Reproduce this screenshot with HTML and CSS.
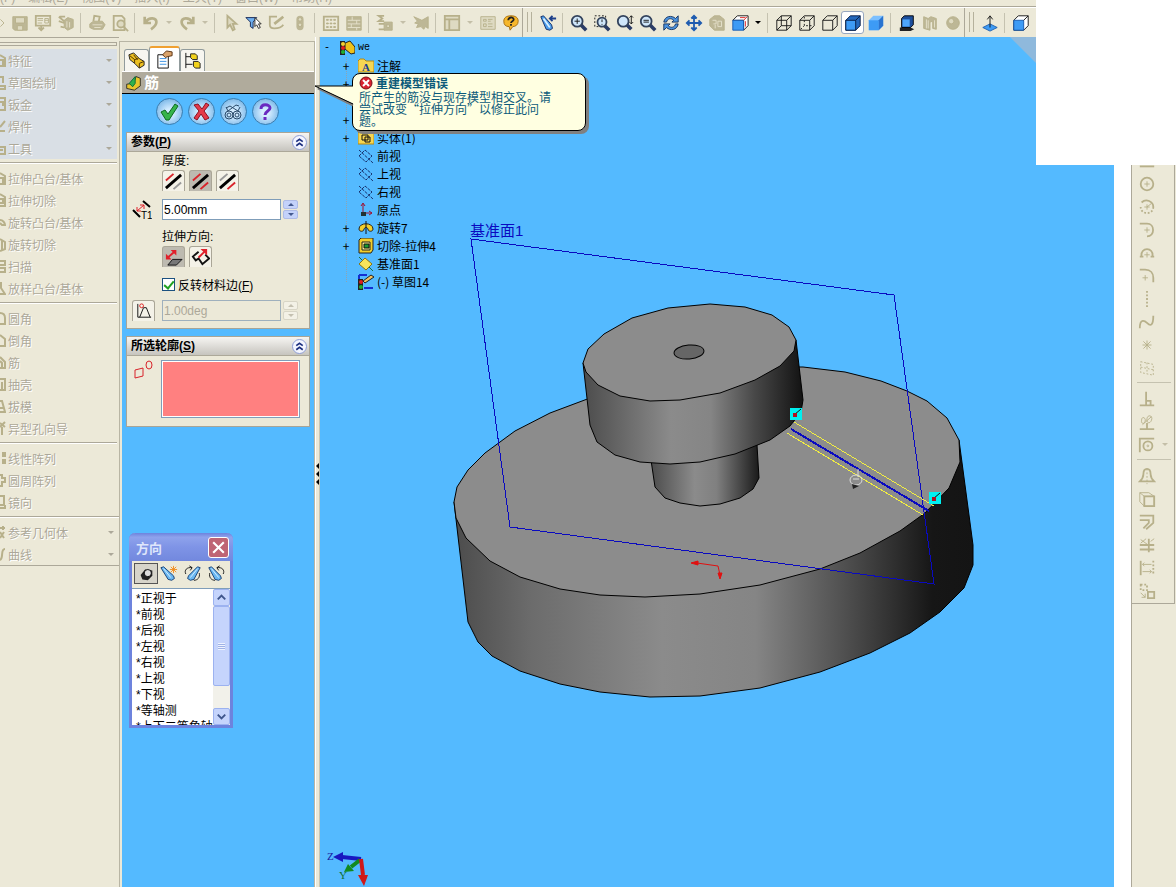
FILE: index.html
```html
<!DOCTYPE html>
<html lang="zh-CN">
<head>
    <meta charset="UTF-8">
    <title>we</title>
    <link rel="stylesheet" href="styles.css">
</head>
<body>
    <nav class="menubar">
        <a href="#">(F)</a><a href="#">编辑(E)</a><a href="#">视图(V)</a><a href="#">插入(I)</a><a href="#">工具(T)</a><a href="#">窗口(W)</a><a href="#">帮助(H)</a>
    </nav>

    <div class="toolbar">
        <button class="tool clipped" aria-label="打开" disabled><svg viewBox="0 0 8 20"><path d="M0 6l4 4-4 4"/></svg></button>
        <button class="tool" aria-label="保存" disabled><svg viewBox="0 0 20 20"><path class="solid" d="M2 3h16v15H4l-2-2z"/><path class="pale" d="M5 4h10v6H5zM7 13h6v5H7z"/></svg></button>
        <button class="tool" aria-label="工程图" disabled><svg viewBox="0 0 20 20"><path class="thick" d="M2 2h16v11H2z"/><path d="M4 5h6M4 7h6M4 10h5M12 5h4v5h-4zM12 7h4"/><path class="thick" d="M8 13v5M5 15l3 3 3-3"/></svg></button>
        <button class="tool" aria-label="装配体" disabled><svg viewBox="0 0 20 20"><path class="solid" d="M8 7l4-3 6 2v9l-6 3-4-3z"/><path class="light" d="M11 8v7M14 9v6"/><path class="thick" d="M2 3l6 5M2 8l6 2M4 14l4 1M3 3h6"/></svg></button>
        <span class="sep"></span>
        <button class="tool" aria-label="打印" disabled><svg viewBox="0 0 20 20"><path class="solid" d="M2 11l4-3h10l3 4-3 5H6l-4-2z"/><path class="thick" d="M6 8l1-6 6 1-1 5"/><path class="light" d="M5 12h11M7 15h7"/></svg></button>
        <button class="tool" aria-label="预览" disabled><svg viewBox="0 0 20 20"><path class="thick" d="M3 2h9l3 3v13H3z"/><circle class="pale thick" cx="11" cy="11" r="4"/><path class="thick" d="M14 14l5 5"/></svg></button>
        <span class="sep"></span>
        <button class="tool" aria-label="撤消" disabled><svg viewBox="0 0 20 20"><path class="heavy" d="M3 3v7h7M4 9c4-6 12-5 12 0 0 4-3 6-6 8"/></svg></button>
        <button class="drop" aria-label="撤消列表" disabled></button>
        <button class="tool" aria-label="重做" disabled><svg viewBox="0 0 20 20"><path class="heavy" d="M17 3v7h-7M16 9C12 3 4 4 4 9c0 4 3 6 6 8"/></svg></button>
        <button class="drop" aria-label="重做列表" disabled></button>
        <span class="sep"></span>
        <button class="tool" aria-label="选择" disabled><svg viewBox="0 0 20 20"><path class="pale thick" d="M6 2v13l3-3 3 6 2-1-2-6h4z"/></svg></button>
        <button class="tool" aria-label="过滤器"><svg viewBox="0 0 20 20"><path d="M1 4h12L9 9v7l-3-2V9z" fill="#6fb0ef" stroke="#102050"/><path d="M11 4v10l2-2 2 4 2-1-2-4h3z" fill="#fff" stroke="#222"/></svg></button>
        <button class="tool" aria-label="草图" disabled><svg viewBox="0 0 20 20"><path class="thick" d="M10 3H2v9c0 3 2 4 5 4 5 0 8-1 10-4"/><path class="heavy" d="M7 11L17 3"/></svg></button>
        <button class="tool" aria-label="重建模型" disabled><svg viewBox="0 0 20 20"><rect class="solid" x="6" y="2" width="8" height="16" rx="4"/><circle class="pale" cx="10" cy="6" r="2"/><circle class="pale" cx="10" cy="12" r="2"/></svg></button>
        <span class="sep"></span>
        <button class="tool" aria-label="网格" disabled><svg viewBox="0 0 20 20"><path class="thick" d="M2 3h16v15H2z"/><path class="solid" d="M5 6h2v1H5zM9 6h2v1H9zM13 6h2v1h-2zM5 10h2v1H5zM9 10h2v1H9zM13 10h2v1h-2zM5 14h2v1H5zM9 14h2v1H9zM13 14h2v1h-2z"/></svg></button>
        <button class="tool" aria-label="纹理" disabled><svg viewBox="0 0 20 20"><path class="solid" d="M2 3h16v15H2z"/><path class="light" d="M3 7h14M3 11h14M3 15h14M8 3v4M13 7v4M7 11v4M13 15v3"/></svg></button>
        <span class="sep"></span>
        <button class="tool" aria-label="计算" disabled><svg viewBox="0 0 20 20"><path class="thick" d="M9 2H3l4 3-4 3h6M3 11h6M3 17h7"/><path class="solid" d="M9 9h9v9H9z"/><path class="pale" d="M12 12h3v3h-3z"/></svg></button>
        <button class="drop" aria-label="计算列表" disabled></button>
        <button class="tool" aria-label="检查" disabled><svg viewBox="0 0 20 20"><path class="solid" d="M2 3l9 4 7-4v13l-3-2-2 3-3-3-5 1 2-4-4-1 3-2z"/></svg></button>
        <span class="sep"></span>
        <button class="tool" aria-label="视窗" disabled><svg viewBox="0 0 20 20"><path class="pale thick" d="M2 2h16v16H2z"/><path class="thick" d="M2 6h16M7 6v12"/></svg></button>
        <button class="drop" aria-label="视窗列表" disabled></button>
        <button class="tool" aria-label="属性" disabled><svg viewBox="0 0 20 20"><path class="pale" d="M2 3h16v14H2z"/><path d="M5 6h3v2H5zM10 6h5M10 8h3M5 11h3v3H5zM10 11h5M10 14h5"/></svg></button>
        <button class="tool" aria-label="帮助"><svg viewBox="0 0 20 20"><path d="M10 2c5 0 8 2 8 6s-3 6-6 6l-3 4-1-4c-4 0-6-2-6-6s3-6 8-6z" fill="#f6b72b" stroke="#a06a10"/><path d="M7 7c0-4 6-4 6-1 0 2-3 2-3 4M10 11v2" fill="none" stroke="#222" stroke-width="2"/></svg></button>
        <span class="grip"></span>
        <button class="tool" aria-label="视图定向"><svg viewBox="0 0 20 20"><path d="M2 3l3-1 9 10 1 4-3 2-4-1z" fill="#4c9cea" stroke="#102860"/><path d="M5 5l7 10" stroke="#d8f0ff" stroke-width="2"/><path d="M19 5h-7M15 2l-3 3 3 3" stroke="#1d3f8a" stroke-width="2" fill="none"/></svg></button>
        <span class="sep"></span>
        <button class="tool" aria-label="整屏显示全图"><svg viewBox="0 0 20 20"><path class="handle" d="M12 12l6 6"/><circle class="lens" cx="8" cy="8" r="6"/><path class="ink" d="M5 8h6M8 5v6"/></svg></button>
        <button class="tool" aria-label="局部放大"><svg viewBox="0 0 20 20"><path class="ink dashed" d="M2 2h12v12H2z"/><path class="handle" d="M13 13l5 5"/><circle class="lens" cx="10" cy="9" r="5"/><path class="ink" d="M10 6v3M10 11v1"/></svg></button>
        <button class="tool" aria-label="放大缩小"><svg viewBox="0 0 20 20"><path class="handle" d="M12 12l5 5"/><circle class="lens" cx="8" cy="8" r="6"/><path class="ink" d="M17 2v9M15 4l2-2 2 2M15 9l2 2 2-2"/></svg></button>
        <button class="tool" aria-label="放大选取范围"><svg viewBox="0 0 20 20"><path class="handle" d="M12 12l6 6"/><circle class="lens" cx="8" cy="8" r="6"/><path class="ink" d="M5 7h6M5 9h6"/></svg></button>
        <button class="tool" aria-label="旋转视图"><svg viewBox="0 0 20 20"><path d="M2 9c1-7 9-8 13-4l3-3v7h-7l2-2c-3-3-7-2-8 2zM18 11c-1 7-9 8-13 4l-3 3v-7h7l-2 2c3 3 7 2 8-2z" fill="#4c94e0" stroke="#12305c"/></svg></button>
        <button class="tool" aria-label="平移"><svg viewBox="0 0 20 20"><path d="M10 2v16M2 10h16M7 5l3-3 3 3M7 15l3 3 3-3M5 7l-3 3 3 3M15 7l3 3-3 3" fill="none" stroke="#1f5cb0" stroke-width="2"/></svg></button>
        <button class="tool" aria-label="3D" disabled><svg viewBox="0 0 20 20"><path class="solid" d="M2 6l5-4h6l5 4v12H7l-5-5z"/><path class="light" d="M5 7h4v4H6M11 8h4v6h-4zM8 12v4"/></svg></button>
        <button class="tool" aria-label="标准视图"><svg viewBox="0 0 20 20"><path d="M7 2h12v11l-5 5V7H2z" fill="#fff" stroke="#111"/><path d="M2 7h12v11H2z" fill="#3d9bf5" stroke="#1458b0"/><path d="M14 7l4-4M10 4h6M16 8v6" stroke="#d22"/></svg></button>
        <button class="drop on" aria-label="标准视图列表"></button>
        <span class="sep"></span>
        <button class="tool" aria-label="线架图"><svg viewBox="0 0 20 20"><path class="ink" d="M2 7h11v11H2zM7 2h11v11H7zM2 7l5-5M13 7l5-5M13 18l5-5M2 18l5-5"/></svg></button>
        <button class="tool" aria-label="隐藏线可见"><svg viewBox="0 0 20 20"><path class="ink" d="M2 7h11v11H2zM2 7l5-5h11v11l-5 5M13 7l5-5"/><path class="ink dashed" d="M7 3v10h10M3 17l4-4"/></svg></button>
        <button class="tool" aria-label="消除隐藏线"><svg viewBox="0 0 20 20"><path class="ink" d="M2 7h11v11H2zM2 7l5-5h11v11l-5 5M13 7l5-5"/></svg></button>
        <button class="tool active" aria-label="带边线上色"><svg viewBox="0 0 20 20"><path d="M2 7l5-5h11v11l-5 5H2z" fill="#2468bc" stroke="#061a40"/><path d="M2 7h11v11H2z" fill="#3d9bf5" stroke="#061a40"/><path d="M13 7l5-5" stroke="#061a40"/></svg></button>
        <button class="tool" aria-label="上色"><svg viewBox="0 0 20 20"><path d="M2 7l5-5h11v11l-5 5H2z" fill="#7cc0ff"/><path d="M2 7h11v11H2z" fill="#3d9bf5"/><path d="M13 7l5-5v11l-5 5z" fill="#2a74d0"/></svg></button>
        <span class="sep"></span>
        <button class="tool" aria-label="阴影"><svg viewBox="0 0 20 20"><path d="M2 15h12l4 2-4 2H2z" fill="#222"/><path d="M4 5l3-3h10v10l-3 3H4z" fill="#1d4f9c" stroke="#000"/><path d="M5 6h8v8H5z" fill="#4ea6fa"/></svg></button>
        <button class="tool" aria-label="剖面视图" disabled><svg viewBox="0 0 20 20"><path class="solid" d="M3 3l5 2 3-2 6 2v12l-4-1V8l-3 1v9l-7-2z"/><path class="light" d="M6 6v10M8 7v9M15 7v8"/></svg></button>
        <button class="tool" aria-label="RealView" disabled><svg viewBox="0 0 20 20"><circle class="solid" cx="10" cy="10" r="7"/><circle class="pale" cx="8" cy="8" r="3"/></svg></button>
        <span class="grip"></span>
        <button class="tool" aria-label="正视于"><svg viewBox="0 0 20 20"><path d="M10 11l8 4-8 4-8-4z" fill="#3d9bf5" stroke="#1e5fae"/><path class="ink" d="M10 15V3M7 6l3-4 3 4"/></svg></button>
        <span class="sep"></span>
        <button class="tool" aria-label="前视"><svg viewBox="0 0 20 20"><path d="M2 7l5-5h11v11l-5 5H2z" fill="#fff" stroke="#111"/><path d="M2 7h11v11H2z" fill="#3d9bf5" stroke="#1458b0"/><path class="ink" d="M13 7l5-5"/></svg></button>
        <button class="tool" aria-label="后视"><svg viewBox="0 0 20 20"><path class="ink" d="M2 7h11v11H2z"/></svg></button>
    </div>

    <main class="workspace">
        <aside class="commands">
            <div class="commands-grip"></div>
            <ul class="commands-tabs">
                <li><button class="arrow" disabled><svg viewBox="0 0 6 16"><path d="M0 3l5 3v8H0M0 8h3v6"/></svg>特征</button></li>
                <li><button class="arrow" disabled><svg viewBox="0 0 6 16"><path d="M0 3h3v6M0 12h5v3H0"/></svg>草图绘制</button></li>
                <li><button class="arrow" disabled><svg viewBox="0 0 6 16"><path d="M0 2h5v12H0M0 6h3v4"/></svg>钣金</button></li>
                <li><button class="arrow" disabled><svg viewBox="0 0 6 16"><path d="M5 3L0 9M0 13h5"/></svg>焊件</button></li>
                <li><button class="arrow" disabled><svg viewBox="0 0 6 16"><path d="M0 7h5v7H0M0 10h3"/></svg>工具</button></li>
            </ul>
            <ul>
                <li><button disabled><svg viewBox="0 0 6 16"><path d="M0 3l5 3v8H0M0 8h3v6"/></svg>拉伸凸台/基体</button></li>
                <li><button disabled><svg viewBox="0 0 6 16"><path d="M0 2l5 3v9H0M0 7h3v4H0"/></svg>拉伸切除</button></li>
                <li><button disabled><svg viewBox="0 0 6 16"><path d="M0 6c3 0 5 3 5 5H2L0 9"/></svg>旋转凸台/基体</button></li>
                <li><button disabled><svg viewBox="0 0 6 16"><path d="M0 3l5 3v7l-5 2M2 5v9"/></svg>旋转切除</button></li>
                <li><button disabled><svg viewBox="0 0 6 16"><path d="M0 3h5v4H0M0 10h5v4H0"/></svg>扫描</button></li>
                <li><button disabled><svg viewBox="0 0 6 16"><path d="M1 2v6l4 6H0"/></svg>放样凸台/基体</button></li>
            </ul>
            <ul>
                <li><button disabled><svg viewBox="0 0 6 16"><path d="M0 3c3 0 5 2 5 5v6H0"/></svg>圆角</button></li>
                <li><button disabled><svg viewBox="0 0 6 16"><path d="M0 3l5 4v7H0"/></svg>倒角</button></li>
                <li><button disabled><svg viewBox="0 0 6 16"><path d="M0 3l5 5v6H0M0 7l2 2v5"/></svg>筋</button></li>
                <li><button disabled><svg viewBox="0 0 6 16"><path d="M0 3h5v11H0M2 6v8"/></svg>抽壳</button></li>
                <li><button disabled><svg viewBox="0 0 6 16"><path d="M0 3h2l3 11H0M0 10h4"/></svg>拔模</button></li>
                <li><button disabled><svg viewBox="0 0 6 16"><path d="M0 3l5 4M5 2L0 7M2 7v8"/></svg>异型孔向导</button></li>
            </ul>
            <ul>
                <li><button disabled><svg viewBox="0 0 6 16"><path d="M3 3h2v3H3zM3 10h2v3H3z"/></svg>线性阵列</button></li>
                <li><button disabled><svg viewBox="0 0 6 16"><path d="M0 3h2v3h3v4H2v4H0"/></svg>圆周阵列</button></li>
                <li><button disabled><svg viewBox="0 0 6 16"><path d="M0 2h4v9H0M0 14h5v-3"/></svg>镜向</button></li>
            </ul>
            <ul>
                <li><button class="arrow" disabled><svg viewBox="0 0 6 16"><path d="M0 4h5M3 2v4M0 8l4 6M4 8l-4 6"/></svg>参考几何体</button></li>
                <li><button class="arrow" disabled><svg viewBox="0 0 6 16"><path d="M5 3c-5 0-1 9-5 11"/></svg>曲线</button></li>
            </ul>
        </aside>

        <section class="manager">
            <div class="tabs">
                <button class="tab" aria-label="特征管理器"><svg viewBox="0 0 20 20"><path d="M2 4l5-2 6 6 5 3v4l-5 3-5-5-5-4z" fill="#edc020" stroke="#222"/><path d="M3 5l5 4 4-1M8 9v4M13 13l5-2M13 13v5M7 4l4 5" fill="none" stroke="#4a3000"/></svg></button>
                <button class="tab current" aria-label="属性管理器"><svg viewBox="0 0 20 20"><path d="M3 5h11v14H3z" fill="#fff" stroke="#111"/><path d="M5 9h7M5 12h7M5 15h7" stroke="#3a90e0"/><path d="M8 5l4-4 6 1v4l-5 1-2 1z" fill="#d9a26a" stroke="#5a3010"/></svg></button>
                <button class="tab" aria-label="配置管理器"><svg viewBox="0 0 20 20"><path class="ink" d="M3 2v16M3 6h5M3 14h7"/><path d="M8 3h5l2 2v4h-5l-2-2zM11 11h5l2 2v5h-5l-2-2z" fill="#f2d21c" stroke="#222"/></svg></button>
            </div>
            <h1 class="manager-title"><svg viewBox="0 0 20 20"><path d="M2 12l8-1 3-8 5 2v9l-7 5-9-2z" fill="#e9c62a" stroke="#222"/><path d="M5 11l7-8v8l-3 4z" fill="#31b24c" stroke="#063"/></svg>筋</h1>
            <div class="confirm">
                <button aria-label="确定"><svg viewBox="0 0 20 20"><path d="M2 10l4-2 3 4 7-10 3 2-9 14H7z" fill="#35b44a" stroke="#0d6a20"/></svg></button>
                <button aria-label="取消"><svg viewBox="0 0 20 20"><path d="M3 3l4-1 4 5 4-6 3 2-5 6 5 7-4 2-4-6-4 6-3-2 5-7z" fill="#e43a4a" stroke="#8a1020"/></svg></button>
                <button aria-label="细节预览"><svg viewBox="0 0 20 20"><g fill="none" stroke="#2a4a6a"><circle cx="6" cy="13" r="4"/><circle cx="14" cy="13" r="4"/><circle cx="6" cy="13" r="2"/><circle cx="14" cy="13" r="2"/><path d="M5 9l8-6 3 1M15 9L7 4 3 6M5 9L3 5M15 9l2-4"/></g></svg></button>
                <button aria-label="帮助"><svg viewBox="0 0 20 20"><path d="M6 7c0-6 9-5 9-1 0 3-5 3-5 7M10 15v3" fill="none" stroke="#6a2ac0" stroke-width="3"/></svg></button>
            </div>

            <form class="groups">
                <fieldset class="group">
                    <div class="group-head"><h2>参数(<u>P</u>)</h2><button type="button" class="fold" aria-label="折叠参数"><svg viewBox="0 0 16 16"><path d="M4 7l4-3 4 3M4 12l4-3 4 3"/></svg></button></div>
                    <div class="group-body">
                        <span class="caption">厚度:</span>
                        <div class="choices">
                            <button type="button" aria-label="第一边"><svg viewBox="0 0 20 20"><path d="M2 9l8-7" stroke="#d8232a" stroke-width="2"/><path d="M2 17L18 3" stroke="#000" stroke-width="3"/><path d="M10 18l8-7" stroke="#999" stroke-width="2"/></svg></button>
                            <button type="button" class="pressed" aria-label="两边"><svg viewBox="0 0 20 20"><path d="M2 9l8-7M10 18l8-7" stroke="#d8232a" stroke-width="2"/><path d="M2 17L18 3" stroke="#000" stroke-width="3"/></svg></button>
                            <button type="button" aria-label="第二边"><svg viewBox="0 0 20 20"><path d="M2 9l8-7" stroke="#999" stroke-width="2"/><path d="M2 17L18 3" stroke="#000" stroke-width="3"/><path d="M10 18l8-7" stroke="#d8232a" stroke-width="2"/></svg></button>
                        </div>
                        <div class="field">
                            <label for="thickness" aria-label="筋厚度"><svg viewBox="0 0 20 20"><path d="M11 1l7 6M1 10l7 7" stroke="#000" stroke-width="2"/><path d="M5 11l7-6M5 7v4h4M8 5h4v4" fill="none" stroke="#e0202a"/><text x="9" y="19" font-size="10">T1</text></svg></label>
                            <input type="text" id="thickness" value="5.00mm">
                            <span class="spin"><button type="button" aria-label="增加"></button><button type="button" class="down" aria-label="减少"></button></span>
                        </div>
                        <span class="caption">拉伸方向:</span>
                        <div class="choices">
                            <button type="button" class="pressed" aria-label="平行于草图"><svg viewBox="0 0 20 20"><path d="M9 12h10l-6 6H4z" fill="#777" stroke="#111"/><path d="M4 10l7-6" stroke="#e0202a" stroke-width="2"/><path d="M2 12V6l6 6zM13 2v6L7 2z" fill="#e0202a"/></svg></button>
                            <button type="button" aria-label="垂直于草图"><svg viewBox="0 0 20 20"><path d="M8 4L2 9l3 4 3-2 4 6 7-6-4-4" fill="none" stroke="#111" stroke-width="2"/><path d="M8 10l6-6" stroke="#e0202a" stroke-width="2"/><path d="M17 1v7l-7-7z" fill="#e0202a"/></svg></button>
                        </div>
                        <label class="check"><input type="checkbox" checked><span>反转材料边(<u>F</u>)</span></label>
                        <div class="field">
                            <button type="button" class="draft" aria-label="拔模开关"><svg viewBox="0 0 20 20"><path class="ink" d="M4 2v14h14M6 16l4-10h3l4 10"/><circle cx="8" cy="4" r="2" fill="none" stroke="#d22"/></svg></button>
                            <input type="text" aria-label="拔模角度" value="1.00deg" disabled>
                            <span class="spin off"><button type="button" aria-label="增加角度" disabled></button><button type="button" class="down" aria-label="减少角度" disabled></button></span>
                        </div>
                    </div>
                </fieldset>
                <fieldset class="group">
                    <div class="group-head"><h2>所选轮廓(<u>S</u>)</h2><button type="button" class="fold" aria-label="折叠所选轮廓"><svg viewBox="0 0 16 16"><path d="M4 7l4-3 4 3M4 12l4-3 4 3"/></svg></button></div>
                    <div class="group-body contour">
                        <label for="contours" aria-label="所选轮廓"><svg viewBox="0 0 20 20"><g fill="none" stroke="#d8232a"><path d="M2 10l8-2v8l-8 2z"/><ellipse cx="16" cy="5" rx="3" ry="4"/></g></svg></label>
                        <select id="contours" size="3"></select>
                    </div>
                </fieldset>
            </form>

            <div class="orientation">
                <header><h2>方向</h2><button class="close" aria-label="关闭"><svg viewBox="0 0 16 16"><path d="M3 3l10 10M13 3L3 13"/></svg></button></header>
                <div class="orientation-tools">
                    <button class="pressed" aria-label="固定"><svg viewBox="0 0 20 20"><path d="M4 11l5-6 8 1v6l-5 5-6-1z" fill="#222"/><circle cx="12" cy="9" r="4" fill="#ddd" stroke="#000"/></svg></button>
                    <button aria-label="新视图"><svg viewBox="0 0 20 20"><path d="M1 3l3-1 11 10 1 3-3 2-4-1z" fill="#6ab8f2" stroke="#123a70"/><path d="M4 4l8 10" stroke="#e0f2ff"/><path d="M15 1v8M11 5h8M12 2l6 6M18 2l-6 6" stroke="#f08a1a"/></svg></button>
                    <button aria-label="更新视图"><svg viewBox="0 0 20 20"><path d="M18 3l-3-1L5 12l-1 3 3 2 4-1z" fill="#6ab8f2" stroke="#123a70"/><path d="M15 4L7 14" stroke="#e0f2ff"/><path d="M9 3C3 2 0 6 2 10M17 9c1 5-2 8-6 8M6 1l3 2-2 3" fill="none" stroke="#111"/></svg></button>
                    <button aria-label="重设视图"><svg viewBox="0 0 20 20"><path d="M2 3l3-1 10 10 1 3-3 2-4-1z" fill="#6ab8f2" stroke="#123a70"/><path d="M5 4l8 10" stroke="#e0f2ff"/><path d="M11 3c6-1 9 3 7 7M3 9c-1 5 2 8 6 8M14 1l-3 2 2 3" fill="none" stroke="#111"/></svg></button>
                </div>
                <div class="orientation-list">
                    <select size="9" aria-label="方向">
                        <option>*正视于</option>
                        <option>*前视</option>
                        <option>*后视</option>
                        <option>*左视</option>
                        <option>*右视</option>
                        <option>*上视</option>
                        <option>*下视</option>
                        <option>*等轴测</option>
                        <option>*上下二等角轴测</option>
                    </select>
                    <div class="scroll">
                        <button aria-label="向上滚动"><svg viewBox="0 0 16 16"><path d="M4 10l4-4 4 4"/></svg></button>
                        <span class="thumb"></span>
                        <button aria-label="向下滚动"><svg viewBox="0 0 16 16"><path d="M4 6l4 4 4-4"/></svg></button>
                    </div>
                </div>
            </div>
        </section>

        <div class="splitter"><i></i><i></i><i></i></div>

        <section class="viewport">
            <svg class="scene" viewBox="320 37 794 850" preserveAspectRatio="xMinYMin slice">
                <defs>
                    <linearGradient id="disc" gradientUnits="userSpaceOnUse" x1="454" y1="0" x2="974" y2="0">
                        <stop offset="0" stop-color="#4c4c4c"/><stop offset=".15" stop-color="#6c6c6c"/><stop offset=".4" stop-color="#8b8b8b"/><stop offset=".58" stop-color="#858585"/><stop offset=".75" stop-color="#505050"/><stop offset=".92" stop-color="#161616"/><stop offset="1" stop-color="#141414"/>
                    </linearGradient>
                    <linearGradient id="boss" gradientUnits="userSpaceOnUse" x1="583" y1="0" x2="803" y2="0">
                        <stop offset="0" stop-color="#4c4c4c"/><stop offset=".4" stop-color="#8b8b8b"/><stop offset=".58" stop-color="#858585"/><stop offset=".78" stop-color="#484848"/><stop offset="1" stop-color="#121212"/>
                    </linearGradient>
                    <linearGradient id="neck" gradientUnits="userSpaceOnUse" x1="651" y1="0" x2="760" y2="0">
                        <stop offset="0" stop-color="#4c4c4c"/><stop offset=".4" stop-color="#8b8b8b"/><stop offset=".6" stop-color="#808080"/><stop offset="1" stop-color="#181818"/>
                    </linearGradient>
                </defs>
                <path d="M1010 37h104v104z" fill="#8fb9dc"/>
                <g stroke="#000" stroke-linejoin="round">
                    <path fill="url(#disc)" d="M454 502L468 622 478 642 492 656 520 671 560 684 600 692 650 697 700 696 760 688 820 672 870 653 910 633 940 612 964 588 973 565 973 545 959 440z"/>
                    <path fill="#8c8c8c" d="M454 502L457 487 468 470 485 453 515 431 550 413 590 398 640 384 700 373 755 367 803 367 845 372 881 381 907 391 927 401 947 418 959 440 960 462 949 488 925 513 900 531 860 553 820 569 760 585 700 594 645 597 600 595 560 589 520 577 490 561 466 538 456 518z"/>
                    <path fill="url(#neck)" d="M651 460L655 487 665 498 680 503 700 506 720 504 740 498 753 489 759 478 757 445z"/>
                    <path fill="url(#boss)" d="M583 363L590 425 597 442 615 455 640 462 670 464 700 462 735 454 770 440 790 426 801 412 803 400 796 340z"/>
                    <path fill="#8c8c8c" d="M583 363L588 349 604 334 632 318 668 308 710 304 745 307 772 315 789 327 796 340 794 351 780 366 755 380 720 393 680 400 650 401 620 396 598 385 586 372z"/>
                    <ellipse fill="#666" cx="689" cy="352" rx="15" ry="7" transform="rotate(-5 689 352)"/>
                </g>
                <path class="line plane" d="M471 239L894 295 934 584 510 527z"/>
                <text class="plane-name" x="470" y="236">基准面1</text>
                <path class="line rib" d="M794 422L934 506M787 433L923 515"/>
                <path class="line axis" d="M791 429L929 511"/>
                <g>
                    <path d="M790 408h12v12h-12zM929 492h12v12h-12z" fill="#00f0f0"/>
                    <path d="M794 415l7-6M933 499l7-6" stroke="#111"/>
                    <path d="M793 413h4v4h-4zM932 497h4v4h-4z" fill="#b01020"/>
                </g>
                <g fill="none" stroke="#ddd"><ellipse cx="856" cy="480" rx="6" ry="5"/><path d="M858 469v8M853 479h6"/></g>
                <path d="M852 484l7 2-6 3z" fill="#222"/>
                <g stroke="#e01010" fill="#e01010"><path d="M697 563l21 3 2 9" fill="none"/><path d="M691 563l7-2v4zM718 573h4l-2 6z"/></g>
                <g class="triad">
                    <path d="M361 859L342 857" stroke="#1818c0" stroke-width="4"/><path d="M333 857l10-5v10z" fill="#1818c0"/>
                    <path d="M360 860l-9 7" stroke="#128a20" stroke-width="4"/><path d="M344 872l4-8 6 7z" fill="#128a20"/>
                    <path d="M361 859l2 16" stroke="#d01818" stroke-width="4"/><path d="M358 875h10l-4 11z" fill="#d01818"/>
                    <text x="327" y="860" fill="#1818a0">Z</text><text x="339" y="879" fill="#107030">Y</text>
                </g>
            </svg>

            <ul class="tree">
                <li class="root"><b>-</b><svg viewBox="0 0 16 16"><path d="M6 3l5-2 5 6v6l-4 1-6-5z" fill="#eec11a" stroke="#222"/><rect x="1" y="1" width="5" height="14" fill="#222"/><circle cx="4" cy="4" r="2" fill="#f5d030"/><circle cx="4" cy="8" r="2" fill="#e02020"/><circle cx="4" cy="12" r="2" fill="#20b030"/></svg>we</li>
                <li><b>+</b><svg viewBox="0 0 16 16"><path d="M0 3l2-2h4l2 2h8v11H0z" fill="#f6d652" stroke="#b58a10"/><text x="4" y="13" font-size="11" class="note">A</text></svg>注解</li>
                <li><b>+</b></li>
                <li></li>
                <li><b>+</b></li>
                <li><b>+</b><svg viewBox="0 0 16 16"><path d="M0 3l2-2h4l2 2h8v11H0z" fill="#f6d652" stroke="#b58a10"/><path class="ink" d="M4 5h6v5H4zM7 7h5v5H7z"/></svg>实体(1)</li>
                <li><b></b><svg viewBox="0 0 16 16"><path class="datum" d="M1 8l6-6 7 6-6 6zM1 2l14 13"/></svg>前视</li>
                <li><b></b><svg viewBox="0 0 16 16"><path class="datum" d="M1 8l6-6 7 6-6 6zM1 2l14 13"/></svg>上视</li>
                <li><b></b><svg viewBox="0 0 16 16"><path class="datum" d="M1 8l6-6 7 6-6 6zM1 2l14 13"/></svg>右视</li>
                <li><b></b><svg viewBox="0 0 16 16"><path d="M5 13V2M5 11h9M3 4l2-3 2 3M11 9l3 2-3 2" fill="none" stroke="#a01030"/><path d="M3 10h5v4H3z" fill="#233"/></svg>原点</li>
                <li><b>+</b><svg viewBox="0 0 16 16"><path d="M1 9c0-7 14-7 14 0 0 3-5 3-5 0-1-2-3-2-4 0 0 3-5 3-5 0z" fill="#f2cf2a" stroke="#222"/><path class="ink" d="M8 1v13"/></svg>旋转7</li>
                <li><b>+</b><svg viewBox="0 0 16 16"><path d="M1 2l2-2h12v12l-2 3H1z" fill="#f2cf2a" stroke="#222"/><path d="M4 4h8v8H4z" fill="#fff48a" stroke="#222"/><path d="M6 6h5v4H6z" fill="#1a9a30" stroke="#111"/></svg>切除-拉伸4</li>
                <li><b></b><svg viewBox="0 0 16 16"><path d="M1 1l4 4M11 11l4 4" stroke="#127040"/><path d="M1 8l6-6 7 6-6 6z" fill="#f7e45a" stroke="#8a7410"/></svg>基准面1</li>
                <li><b></b><svg viewBox="0 0 16 16"><path d="M1 1h8M1 1v5M6 14h9" stroke="#1430d0" stroke-width="2"/><path d="M5 7l8-6 3 2-9 6z" fill="#f0c060" stroke="#222"/><rect x="0" y="5" width="5" height="11" fill="#222"/><circle cx="3" cy="8" r="2" fill="#e02020"/><circle cx="3" cy="13" r="2" fill="#20b030"/></svg>(-) 草图14</li>
            </ul>

            <div class="callout" role="alert">
                <svg class="tail" viewBox="0 0 40 24"><path d="M39 20L4 3" stroke="#808080" stroke-width="3"/><path d="M40 1H1l39 18z" fill="#ffffe1"/><path d="M39 1H1l38 18" fill="none" stroke="#000"/></svg>
                <h3><svg viewBox="0 0 14 14"><circle cx="7" cy="7" r="6" fill="#d8232f" stroke="#7a1018"/><path d="M4 4l6 6M10 4l-6 6" stroke="#fff" stroke-width="2"/></svg>重建模型错误</h3>
                <p>所产生的筋没与现存模型相交叉。请<br>尝试改变“拉伸方向”以修正此问<br>题。</p>
            </div>
        </section>

        <aside class="rail">
            <button class="tool" aria-label="直线" disabled><svg viewBox="0 0 20 20"><path class="thick" d="M2 16h16"/></svg></button>
            <button class="tool" aria-label="圆" disabled><svg viewBox="0 0 20 20"><circle class="thick" cx="10" cy="10" r="7"/><path d="M7 10h6M10 7v6"/></svg></button>
            <button class="tool" aria-label="圆心圆弧" disabled><svg viewBox="0 0 20 20"><path class="thick" d="M4 5c5-5 13-1 13 5"/><path class="thick dashed" d="M17 10c0 9-14 9-14 0"/><path d="M7 10h6M10 7v6M10 10l5-4"/></svg></button>
            <button class="tool" aria-label="切线弧" disabled><svg viewBox="0 0 20 20"><path class="thick" d="M2 3h8c9 0 9 14 0 14"/><path d="M7 10h6M10 7v6"/></svg></button>
            <button class="tool" aria-label="三点圆弧" disabled><svg viewBox="0 0 20 20"><path class="thick" d="M4 14c-2-11 14-11 12 0M2 14h4M14 14h4"/><path d="M7 12h6M10 9v6"/></svg></button>
            <button class="tool" aria-label="圆角" disabled><svg viewBox="0 0 20 20"><path class="thick" d="M2 3h6c6 0 9 4 9 9v5"/><path d="M5 12h6M8 9v6"/></svg></button>
            <button class="tool" aria-label="中心线" disabled><svg viewBox="0 0 20 20"><path class="thick dashed" d="M10 1v18"/></svg></button>
            <button class="tool" aria-label="样条曲线" disabled><svg viewBox="0 0 20 20"><path class="thick" d="M2 17c0-12 6-8 8-6 4 4 7 3 7-8"/></svg></button>
            <button class="tool" aria-label="点" disabled><svg viewBox="0 0 20 20"><path d="M10 5v10M5 10h10M6 6l8 8M14 6l-8 8"/></svg></button>
            <button class="tool" aria-label="基准面" disabled><svg viewBox="0 0 20 20"><path class="dashed" d="M3 3l14 3v12L3 15zM3 9l14 3M10 4v12"/></svg></button>
            <span class="sep"></span>
            <button class="tool" aria-label="添加几何关系" disabled><svg viewBox="0 0 20 20"><path class="thick" d="M2 17h16M9 2v15M9 12h5v5"/></svg></button>
            <button class="tool" aria-label="显示几何关系" disabled><svg viewBox="0 0 20 20"><path class="thick" d="M2 18h16M10 11v7"/><path d="M4 8c0-5 5-3 4 1s-5 3-4-1zM10 6c1-5 7-3 5 2s-6 3-5-2zM5 13l10-9"/></svg></button>
            <div class="pair">
                <button class="tool" aria-label="快速捕捉" disabled><svg viewBox="0 0 20 20"><path class="thick" d="M2 18V3h16"/><circle class="thick" cx="11" cy="11" r="5"/><circle cx="11" cy="11" r="1"/></svg></button>
                <button class="drop" aria-label="快速捕捉列表" disabled></button>
            </div>
            <span class="sep"></span>
            <button class="tool" aria-label="镜向实体" disabled><svg viewBox="0 0 20 20"><path class="thick" d="M10 2c-3 0-4 3-4 6 0 4-2 6-4 8h16c-2-2-4-4-4-8 0-3-1-6-4-6z"/><path class="dashed" d="M10 2v17"/></svg></button>
            <button class="tool" aria-label="转换实体引用" disabled><svg viewBox="0 0 20 20"><path d="M2 3h10l6 4v11H7l-5-5zM2 3l5 4h11"/><path class="thick" d="M7 7h11v11H7z"/></svg></button>
            <button class="tool" aria-label="等距实体" disabled><svg viewBox="0 0 20 20"><path class="thick" d="M2 3h15v8l-8 7M2 8h10v3l-6 6"/></svg></button>
            <button class="tool" aria-label="剪裁实体" disabled><svg viewBox="0 0 20 20"><path class="thick" d="M2 10h16M12 3v15M2 15h16"/><path d="M3 4l7 5M3 8l6-5M14 6l4-3"/></svg></button>
            <button class="tool" aria-label="构造几何线" disabled><svg viewBox="0 0 20 20"><path class="thick" d="M3 2v16"/><path class="thick dashed" d="M17 2v16"/><path d="M5 6h10M5 14h10M7 4L5 6l2 2M13 12l2 2-2 2"/></svg></button>
            <button class="tool" aria-label="移动实体" disabled><svg viewBox="0 0 20 20"><path class="thick" d="M11 11h7v7h-7z"/><path class="thick dashed" d="M3 3h7v6H3z"/><path d="M3 12l5 5M8 13v4H4"/></svg></button>
        </aside>
    </main>
    <div class="blank"></div>
</body>
</html>
```
FILE: styles.css
```css
* {
    box-sizing: border-box;
}
body {
    margin: 0;
    height: 100vh;
    display: flex;
    flex-direction: column;
    overflow: hidden;
    position: relative;
    background-color: #ece9d8;
    font-family: "Liberation Sans", "Noto Sans CJK SC", sans-serif;
    font-size: 12px;
    color: #000;
}
h1, h2, h3, p, ul {
    margin: 0;
    padding: 0;
    font-size: 12px;
}
ul {
    list-style: none;
}
button {
    margin: 0;
    padding: 0;
    border: none;
    background: none;
    font: inherit;
}
svg {
    display: block;
    flex: none;
}

/* menu and toolbar */
.menubar {
    flex: none;
    display: flex;
    align-items: flex-end;
    gap: 13px;
    height: 7px;
    overflow: hidden;
    border-bottom: 1px solid #aca899;
}
.menubar a {
    line-height: 14px;
    padding-bottom: 1px;
    color: #aca899;
    text-decoration: none;
    white-space: nowrap;
}
.toolbar {
    flex: none;
    display: flex;
    align-items: center;
    height: 30px;
    border-top: 1px solid #fff;
    overflow: hidden;
}
.tool {
    flex: none;
    display: flex;
    align-items: center;
    justify-content: center;
    width: 23px;
    height: 23px;
}
.tool svg {
    width: 18px;
    height: 18px;
}
.tool.clipped {
    width: 8px;
}
.tool.clipped svg {
    width: 8px;
}
.tool.active {
    background-color: #fff;
    border: 1px solid #98a8c0;
    border-radius: 3px;
}
.tool:disabled path, .tool:disabled circle, .commands path {
    fill: none;
    stroke: #b7b08a;
}
.tool:disabled .solid {
    fill: #bdb796;
}
.tool:disabled .pale {
    fill: #dedac2;
}
.tool:disabled .light {
    stroke: #e6e2cd;
}
.tool:disabled .thick {
    stroke-width: 2;
}
.tool:disabled .heavy {
    stroke-width: 3;
}
.dashed {
    stroke-dasharray: 2 2;
}
.ink {
    fill: none;
    stroke: #111;
}
.lens {
    fill: #cfe6fa;
    stroke: #33435c;
    stroke-width: 2;
}
.handle {
    stroke: #2a3c66;
    stroke-width: 4;
}
.drop {
    flex: none;
    display: flex;
    align-items: center;
    justify-content: center;
    width: 13px;
    height: 23px;
    color: #c4bfa8;
}
.drop.on {
    color: #000;
}
.drop::after, .arrow::after {
    content: "";
    border: 3px solid transparent;
    border-top-color: currentColor;
    border-bottom: none;
}
.sep {
    flex: none;
    width: 8px;
    height: 20px;
    background: linear-gradient(#c5c2b0, #c5c2b0) 3px 0 / 1px 100% no-repeat;
}
.grip {
    flex: none;
    width: 14px;
    height: 29px;
    border-left: 1px solid #aca899;
    background: linear-gradient(#b5b19c, #b5b19c) 4px 4px / 1px 20px no-repeat,
        linear-gradient(#b5b19c, #b5b19c) 8px 4px / 1px 20px no-repeat;
}

.workspace {
    flex: 1;
    display: flex;
    min-height: 0;
}

/* feature commands on the left */
.commands {
    flex: none;
    width: 119px;
    border-top: 1px solid #aca899;
}
.commands-grip {
    height: 4px;
    margin: 4px 2px 3px 0;
    border: 1px solid #aca899;
    border-left: none;
}
.commands ul {
    margin-right: 2px;
}
.commands ul + ul {
    padding-top: 8px;
    background: linear-gradient(#aca899, #aca899) 0 3px / 100% 1px no-repeat,
        linear-gradient(#fff, #fff) 0 4px / 100% 1px no-repeat;
}
.commands ul:last-child {
    margin-right: 0;
    border-bottom: 1px solid #aca899;
}
.commands .commands-tabs {
    background-color: #d9dfe5;
}
.commands button {
    display: flex;
    align-items: center;
    gap: 2px;
    width: 100%;
    height: 22px;
    color: #aca899;
    text-align: left;
    text-shadow: 1px 1px #fff;
    white-space: nowrap;
}
.commands svg {
    width: 6px;
    height: 16px;
}
.commands path {
    stroke-width: 2;
}
.arrow::after {
    margin-left: auto;
    margin-right: 5px;
}

/* property manager */
.manager {
    flex: none;
    position: relative;
    display: flex;
    flex-direction: column;
    width: 196px;
    margin-top: 4px;
    border: 1px solid #b8b5a4;
    border-bottom: none;
    background: linear-gradient(#54baff, #54baff) 2px 30px / 192px 100% no-repeat;
}
.tabs {
    flex: none;
    display: flex;
    align-items: flex-end;
    height: 29px;
    padding-left: 4px;
}
.tab {
    display: flex;
    align-items: center;
    justify-content: center;
    width: 25px;
    height: 22px;
    background-color: #f7f6f0;
    border: 1px solid #919b9c;
    border-bottom: none;
    border-radius: 3px 3px 0 0;
}
.tab svg {
    width: 19px;
    height: 19px;
}
.tab.current {
    width: 31px;
    height: 25px;
    background-color: #fff;
    border-top: 2px solid #f0a030;
}
.manager-title {
    flex: none;
    display: flex;
    align-items: center;
    gap: 2px;
    height: 23px;
    margin: 0 0 0 2px;
    padding-left: 3px;
    background-color: #b0ab9c;
    border-top: 1px solid #fff;
    border-bottom: 1px solid #000;
    color: #fff;
    font-size: 15px;
    line-height: 20px;
}
.manager-title svg {
    width: 17px;
    height: 17px;
}
.confirm {
    flex: none;
    display: flex;
    justify-content: center;
    gap: 5px;
    padding: 4px 0 7px;
}
.confirm button {
    display: flex;
    align-items: center;
    justify-content: center;
    width: 27px;
    height: 27px;
    border: 1px solid #3a7db0;
    border-radius: 50%;
    background: radial-gradient(circle at 50% 55%, #d4ecff 20%, #96c8f0 60%, #5d9fd0);
}
.confirm svg {
    width: 20px;
    height: 20px;
}
.groups {
    flex: none;
    display: flex;
    flex-direction: column;
    gap: 7px;
    margin: 0 4px 0 6px;
}
.group {
    margin: 0;
    padding: 0;
    min-width: 0;
    border: 1px solid #a9a596;
    background-color: #ece9d8;
}
.group-head {
    display: flex;
    align-items: center;
    justify-content: space-between;
    height: 19px;
    padding: 0 2px 0 4px;
    border-bottom: 1px solid #aca899;
    background: linear-gradient(#f6f5f2, #c6c4be);
}
.group-head h2 {
    line-height: 18px;
}
.fold {
    width: 15px;
    height: 15px;
    border: 1px solid #8f9ed6;
    border-radius: 50%;
    background-color: #f4f6ff;
}
.fold svg {
    width: 13px;
    height: 13px;
}
.fold path {
    fill: none;
    stroke: #1c2f80;
    stroke-width: 2;
}
.group-body {
    padding: 0 0 7px 35px;
}
.caption {
    display: block;
    line-height: 18px;
}
.choices {
    display: flex;
    gap: 4px;
    margin-bottom: 8px;
}
.choices button, .draft {
    display: flex;
    align-items: center;
    justify-content: center;
    width: 23px;
    height: 21px;
    border: 1px solid #aaa697;
    border-bottom: none;
    border-radius: 3px 3px 0 0;
    background-color: #f4f2e8;
}
.choices .pressed {
    background-color: #bdbab0;
}
.choices svg, .draft svg {
    width: 19px;
    height: 19px;
}
.field {
    display: flex;
    align-items: center;
    height: 21px;
    margin-left: -30px;
    margin-bottom: 8px;
}
.field label, .draft {
    flex: none;
    width: 23px;
    margin-right: 7px;
}
.field label svg {
    width: 20px;
    height: 20px;
}
.field input {
    width: 119px;
    height: 21px;
    padding: 0 1px;
    border: 1px solid #7f9db9;
    background-color: #fff;
    font: inherit;
}
.field input:disabled {
    border-color: #9fb0bd;
    background-color: #ece9d8;
    color: #aca899;
}
.spin {
    display: flex;
    flex-direction: column;
    gap: 1px;
    margin-left: 2px;
}
.spin button {
    display: flex;
    align-items: center;
    justify-content: center;
    width: 15px;
    height: 9px;
    border: 1px solid #aebbe6;
    border-radius: 2px;
    background-color: #c4d2fa;
    color: #43598f;
}
.spin button::after {
    content: "";
    border: 3px solid transparent;
    border-top: none;
    border-bottom-color: currentColor;
}
.spin .down::after {
    border-top: 3px solid currentColor;
    border-bottom: none;
}
.spin.off button {
    border-color: #d8d5c6;
    background-color: #f3f1e6;
    color: #c4c0b0;
}
.check {
    display: flex;
    align-items: center;
    gap: 3px;
    height: 18px;
    margin-bottom: 7px;
}
.check input {
    appearance: none;
    flex: none;
    width: 13px;
    height: 13px;
    margin: 0;
    border: 1px solid #1c5180;
    background-color: #fff;
}
.check input:checked::after {
    content: "";
    display: block;
    width: 4px;
    height: 8px;
    margin: 0 0 0 3px;
    border: solid #21a121;
    border-width: 0 2px 2px 0;
    transform: rotate(40deg);
}
.group-body .field:last-child {
    margin-bottom: 0;
}
.group-body.contour {
    display: flex;
    gap: 8px;
    padding: 4px 9px 8px 6px;
}
.contour label svg {
    width: 20px;
    height: 20px;
}
.contour select {
    flex: 1;
    height: 58px;
    border: 1px solid #7f9db9;
    outline: 1px solid #fff;
    outline-offset: -2px;
    border-radius: 0;
    background-color: #ff8080;
}

/* floating orientation window */
.orientation {
    position: absolute;
    left: 9px;
    top: 491px;
    width: 104px;
    border: 3px solid #6d83dd;
    border-top: none;
    border-radius: 6px 6px 0 0;
    background-color: #ece9d8;
}
.orientation header {
    display: flex;
    align-items: center;
    justify-content: space-between;
    height: 28px;
    margin: 0 -3px;
    padding: 0 4px 0 7px;
    border-radius: 6px 6px 0 0;
    background: linear-gradient(#6d83dd, #8ea2ec 15%, #7f94e6 50%, #7288de);
    color: #dfe6fb;
}
.orientation h2 {
    font-size: 13px;
    font-weight: 700;
}
.close {
    width: 21px;
    height: 21px;
    border: 1px solid #fff;
    border-radius: 3px;
    background-color: #bf6474;
}
.close svg {
    margin: 0 auto;
    width: 17px;
    height: 17px;
}
.close path {
    stroke: #fff;
    stroke-width: 2;
}
.orientation-tools {
    display: flex;
    height: 27px;
    padding: 2px;
}
.orientation-tools button {
    display: flex;
    align-items: center;
    justify-content: center;
    width: 24px;
    height: 21px;
}
.orientation-tools .pressed {
    border: 1px solid #555;
    background-color: #d6d4ca;
}
.orientation-tools svg {
    width: 18px;
    height: 18px;
}
.orientation-list {
    display: flex;
    height: 137px;
    border-top: 1px solid #7f9db9;
    background-color: #fff;
}
.orientation-list select {
    flex: 1;
    min-width: 0;
    padding: 0;
    border: none;
    border-radius: 0;
    background-color: #fff;
    overflow: hidden;
    font: inherit;
}
.orientation-list option {
    height: 16px;
    min-height: 16px;
    padding: 0 4px;
    line-height: 14px;
}
.scroll {
    display: flex;
    flex-direction: column;
    width: 17px;
    background-color: #f2f1ea;
}
.scroll button, .thumb {
    border: 1px solid #9cb2f0;
    border-radius: 2px;
    background-color: #c5d4fc;
}
.scroll button {
    height: 17px;
}
.scroll button:last-child {
    margin-top: auto;
}
.scroll path {
    fill: none;
    stroke: #3f568c;
    stroke-width: 2;
}
.thumb {
    height: 80px;
    background-image: repeating-linear-gradient(#eef3ff 0 1px, #9fb2e6 1px 2px);
    background-size: 7px 7px;
    background-position: center;
    background-repeat: no-repeat;
}

.splitter {
    flex: none;
    display: flex;
    flex-direction: column;
    align-items: flex-end;
    justify-content: center;
    gap: 2px;
    width: 5px;
    padding-top: 24px;
    border-left: 1px solid #fff;
    border-right: 1px solid #c9c6b5;
}
.splitter i {
    border: 3px solid transparent;
    border-left: none;
    border-right-color: #000;
}

/* model view */
.viewport {
    flex: 1;
    position: relative;
    min-width: 0;
    background-color: #54baff;
}
.scene {
    position: absolute;
    width: 100%;
    height: 100%;
}
.line {
    fill: none;
    shape-rendering: crispEdges;
}
.plane {
    stroke: #0a0ac0;
}
.plane-name {
    font-size: 15px;
    fill: #0a0ac0;
}
.rib {
    stroke: #f2ee40;
}
.axis {
    stroke: #0a0ac0;
    stroke-width: 2;
}
.triad text {
    font-family: "Liberation Serif", serif;
    font-size: 11px;
}
.tree {
    position: relative;
    display: inline-block;
    padding: 2px 0 0 20px;
    font-family: "Noto Sans CJK SC", sans-serif;
}
.tree::before {
    content: "";
    position: absolute;
    left: 26px;
    top: 20px;
    bottom: 9px;
    border-left: 1px dotted #8fa3b0;
}
.tree li {
    position: relative;
    display: flex;
    align-items: center;
    height: 18px;
    line-height: 18px;
    white-space: nowrap;
}
.tree .root {
    margin-left: -19px;
    font-family: "Liberation Mono", monospace;
    font-size: 10px;
}
.tree b {
    width: 12px;
    margin-right: 6px;
    font-weight: 400;
    text-align: center;
}
.tree svg {
    width: 16px;
    height: 16px;
    margin-right: 3px;
}
.note {
    font-family: "Liberation Serif", serif;
    font-weight: bold;
    fill: #1c3f90;
}
.datum {
    fill: none;
    stroke: #16306c;
    stroke-dasharray: 3 1;
}
.callout {
    position: absolute;
    left: 32px;
    top: 36px;
    width: 234px;
    height: 58px;
    padding: 2px 6px;
    border: 1px solid #000;
    border-radius: 8px;
    background-color: #ffffe1;
    box-shadow: 3px 3px #808080;
    font-family: "Noto Sans CJK SC", sans-serif;
    color: #0b5a7a;
}
.callout h3 {
    display: flex;
    align-items: center;
    gap: 3px;
    line-height: 14px;
}
.callout h3 svg {
    width: 14px;
    height: 14px;
}
.callout p {
    line-height: 12px;
    margin-top: 1px;
}
.tail {
    position: absolute;
    left: -39px;
    top: 11px;
    width: 40px;
    height: 24px;
}

/* sketch tools on the right */
.rail {
    flex: none;
    width: 62px;
    border-left: 17px solid #fff;
    padding-top: 112px;
    background: linear-gradient(#aca899, #aca899) 0 0 / 1px 100% no-repeat,
        linear-gradient(#aca899, #aca899) 43px 0 / 1px 567px no-repeat,
        linear-gradient(#aca899, #aca899) 0 566px / 43px 1px no-repeat;
}
.rail .tool, .rail .pair {
    margin-left: 4px;
}
.pair {
    display: flex;
}
.pair .tool {
    margin-left: 0;
}
.rail .sep {
    display: block;
    width: 34px;
    height: 8px;
    margin-left: 6px;
    background: linear-gradient(#c5c2b0, #c5c2b0) 0 3px / 100% 1px no-repeat;
}

/* empty corner over the toolbar and the model view */
.blank {
    position: absolute;
    top: 0;
    right: 0;
    width: 140px;
    height: 165px;
    background-color: #fff;
}
```
